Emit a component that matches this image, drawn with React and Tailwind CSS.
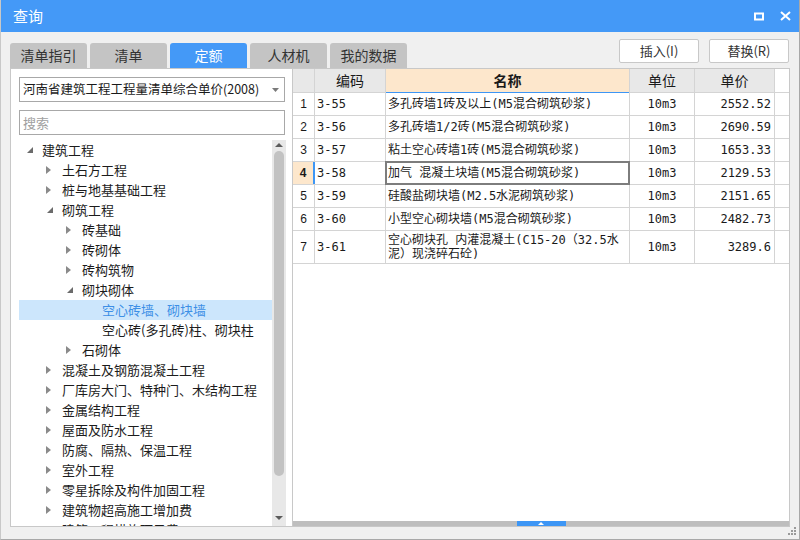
const TABS = ['清单指引', '清单', '定额', '人材机', '我的数据']

const TREE = [
  { t: '建筑工程', l: 0, s: 'open' },
  { t: '土石方工程', l: 1, s: 'closed' },
  { t: '桩与地基基础工程', l: 1, s: 'closed' },
  { t: '砌筑工程', l: 1, s: 'open' },
  { t: '砖基础', l: 2, s: 'closed' },
  { t: '砖砌体', l: 2, s: 'closed' },
  { t: '砖构筑物', l: 2, s: 'closed' },
  { t: '砌块砌体', l: 2, s: 'open' },
  { t: '空心砖墙、砌块墙', l: 3, sel: true },
  { t: '空心砖(多孔砖)柱、砌块柱', l: 3 },
  { t: '石砌体', l: 2, s: 'closed' },
  { t: '混凝土及钢筋混凝土工程', l: 1, s: 'closed' },
  { t: '厂库房大门、特种门、木结构工程', l: 1, s: 'closed' },
  { t: '金属结构工程', l: 1, s: 'closed' },
  { t: '屋面及防水工程', l: 1, s: 'closed' },
  { t: '防腐、隔热、保温工程', l: 1, s: 'closed' },
  { t: '室外工程', l: 1, s: 'closed' },
  { t: '零星拆除及构件加固工程', l: 1, s: 'closed' },
  { t: '建筑物超高施工增加费', l: 1, s: 'closed' },
  { t: '建筑工程措施项目费', l: 1, s: 'closed' },
]

const INDENT = ['pl-0', 'pl-[20px]', 'pl-[40px]', 'pl-[60px]']

const ROWS = [
  ['3-55', ['多孔砖墙1砖及以上(M5混合砌筑砂浆)'], '10m3', '2552.52'],
  ['3-56', ['多孔砖墙1/2砖(M5混合砌筑砂浆)'], '10m3', '2690.59'],
  ['3-57', ['粘土空心砖墙1砖(M5混合砌筑砂浆)'], '10m3', '1653.33'],
  ['3-58', ['加气 混凝土块墙(M5混合砌筑砂浆)'], '10m3', '2129.53'],
  ['3-59', ['硅酸盐砌块墙(M2.5水泥砌筑砂浆)'], '10m3', '2151.65'],
  ['3-60', ['小型空心砌块墙(M5混合砌筑砂浆)'], '10m3', '2482.73'],
  ['3-61', ['空心砌块孔 内灌混凝土(C15-20（32.5水', '泥）现浇碎石砼)'], '10m3', '3289.6'],
]

const ui = { fontFamily: '"Noto Sans CJK SC", "Noto Sans", sans-serif' }
const mono = { fontFamily: '"DejaVu Sans Mono", "Noto Sans CJK SC", monospace' }

function Arrow({ open }) {
  if (open)
    return (
      <svg width="6" height="6" className="ml-[8px]">
        <polygon points="6,0 6,6 0,6" fill="#6b6b6b" />
      </svg>
    )
  return (
    <svg width="5" height="8" className="ml-[7px]">
      <polygon points="0,0 5,4 0,8" fill="#8a8a8a" />
    </svg>
  )
}

function Tree() {
  return (
    <div className="flex mt-[5px] h-[386px]">
      <div className="w-[253px] overflow-hidden">
        {TREE.map((n, i) => (
          <div key={i}
            className={`h-[20px] flex items-center text-[13px] whitespace-nowrap ${INDENT[n.l]} ${n.sel ? 'bg-[#cce6fc] text-[#3d8fe6]' : 'text-[#1c1c1c]'}`}>
            <div className="w-[23px] h-[20px] flex items-center shrink-0">
              {n.s && <Arrow open={n.s === 'open'} />}
            </div>
            <span className="leading-[20px]">{n.t}</span>
          </div>
        ))}
      </div>
      {/* vertical scrollbar */}
      <div className="w-[14px] bg-[#e8e8e8] flex flex-col items-center">
        <svg width="8" height="11" className="shrink-0">
          <polygon points="0,7 4,3 8,7" fill="#5c5c5c" />
        </svg>
        <div className="w-[10px] h-[325px] rounded-full bg-[#c2c2c2]" />
        <div className="flex-1" />
        <svg width="8" height="9" className="shrink-0 mb-[2px]">
          <polygon points="0,1 8,1 4,5" fill="#5c5c5c" />
        </svg>
      </div>
    </div>
  )
}

function DataTable() {
  const cell = 'h-full border-r border-[#d4d4d4] flex items-center shrink-0'
  return (
    <div className="text-[#1a1a1a]">
      <div className="flex h-[24px] border-b border-[#d4d4d4] text-[14px]" style={ui}>
        <div className={`${cell} w-[22px] bg-[#e8e8e8]`} />
        <div className={`${cell} w-[71px] bg-[#e8e8e8] justify-center`}>编码</div>
        <div className={`${cell} w-[244px] bg-[#fde7cc] justify-center font-bold relative`}>
          名称
          <div className="absolute left-0 right-0 bottom-[-1px] h-[1px] bg-[#3d96f5]" />
        </div>
        <div className={`${cell} w-[65px] bg-[#e8e8e8] justify-center`}>单位</div>
        <div className={`${cell} w-[80px] bg-[#e8e8e8] justify-center`}>单价</div>
      </div>
      {ROWS.map((r, i) => {
        const cur = i === 3
        return (
          <div key={i} className={`flex border-b border-[#d4d4d4] text-[12px] ${i === 6 ? 'h-[33px]' : 'h-[23px]'}`}>
            <div className={`h-full shrink-0 w-[22px] flex items-center justify-center ${cur ? 'bg-[#fde7cc] font-bold border-r-2 border-[#3d96f5] w-[22px]' : 'border-r border-[#d4d4d4]'}`}
              style={{ fontFamily: '"Liberation Sans", sans-serif' }}>
              {i + 1}
            </div>
            <div className={`${cell} w-[71px] pl-[2px]`} style={mono}>{r[0]}</div>
            <div className={`${cell} w-[244px] pl-[2px] relative`} style={mono}>
              <div className="leading-[14px] whitespace-nowrap">
                {r[1].map((s, k) => <div key={k}>{s}</div>)}
              </div>
              {cur && <div className="absolute inset-[-1px] border-2 border-[#7d7d7d]" />}
            </div>
            <div className={`${cell} w-[65px] justify-center`} style={mono}>{r[2]}</div>
            <div className={`${cell} w-[80px] justify-end pr-[3px]`} style={mono}>{r[3]}</div>
          </div>
        )
      })}
    </div>
  )
}

export default function App() {
  return (
    <div className="w-[800px] h-[540px] bg-[#f0f0f0] border-l border-r border-b border-l-[#c8c8c8] border-r-[#a8a8a8] border-b-[#a8a8a8] flex flex-col relative overflow-hidden" style={ui}>
      {/* title bar */}
      <div className="h-[32px] bg-[#4499f7] flex items-center justify-between pl-[12px] pr-[8px] shrink-0">
        <span className="text-white text-[15px]">查询</span>
        <div className="flex items-center gap-[16px]">
          <svg width="10" height="9">
            <rect x="1" y="1.5" width="8" height="6" fill="none" stroke="#fff" strokeWidth="2" />
          </svg>
          <svg width="11" height="10">
            <path d="M1 1 L10 9 M10 1 L1 9" stroke="#fff" strokeWidth="2" />
          </svg>
        </div>
      </div>

      <div className="flex-1 flex flex-col px-[9px] pt-[7px]">
        {/* tabs + buttons */}
        <div className="h-[29px] flex justify-between items-end shrink-0">
          <div className="flex gap-[3px]">
            {TABS.map((t, i) => (
              <div key={t}
                className={`w-[77px] h-[25px] rounded-t-[3px] flex items-center justify-center text-[14px] ${i === 2 ? 'bg-[#4499f7] text-white' : 'bg-[#c4c4c4] text-[#333]'}`}>
                {t}
              </div>
            ))}
          </div>
          <div className="flex gap-[10px] mb-[5px] mr-[1px]">
            {['插入(I)', '替换(R)'].map(b => (
              <div key={b} className="w-[80px] h-[24px] bg-white border border-[#c8c8c8] rounded-[2px] flex items-center justify-center text-[13px] text-[#333]">
                {b}
              </div>
            ))}
          </div>
        </div>

        {/* content panel */}
        <div className="h-[459px] bg-white border border-[#c8c8c8] flex shrink-0">
          <div className="w-[281px] shrink-0 pl-[8px] pt-[8px] flex flex-col">
            <div className="w-[266px] h-[25px] border border-[#a8a8a8] flex items-center justify-between pl-[3px] pr-[3px] text-[12.5px] text-[#1a1a1a] overflow-hidden">
              <span className="whitespace-nowrap">河南省建筑工程工程量清单综合单价(2008)</span>
              <svg width="7" height="4" className="mr-[2px] shrink-0">
                <polygon points="0,0 7,0 3.5,4" fill="#7a7a7a" />
              </svg>
            </div>
            <div className="w-[266px] h-[25px] mt-[8px] border border-[#a8a8a8] flex items-center px-[3px] text-[13px] text-[#a0a0a0]">
              搜索
            </div>
            <Tree />
          </div>
          <div className="flex-1 border-l border-[#c8c8c8] flex flex-col">
            <DataTable />
            <div className="flex-1" />
            <div className="h-[5px] bg-[#bebebe] flex justify-center">
              <div className="w-[49px] h-[5px] bg-[#3d96f5] flex items-center justify-center">
                <svg width="6" height="3">
                  <polygon points="0,3 3,0 6,3" fill="#fff" />
                </svg>
              </div>
            </div>
          </div>
        </div>
      </div>

      {/* resize grip */}
      <svg width="9" height="9" className="absolute right-[2px] bottom-[3px]">
        <rect x="6" y="0" width="2" height="2" fill="#9a9a9a" />
        <rect x="3" y="3" width="2" height="2" fill="#9a9a9a" />
        <rect x="6" y="3" width="2" height="2" fill="#9a9a9a" />
        <rect x="0" y="6" width="2" height="2" fill="#9a9a9a" />
        <rect x="3" y="6" width="2" height="2" fill="#9a9a9a" />
        <rect x="6" y="6" width="2" height="2" fill="#9a9a9a" />
      </svg>
    </div>
  )
}
